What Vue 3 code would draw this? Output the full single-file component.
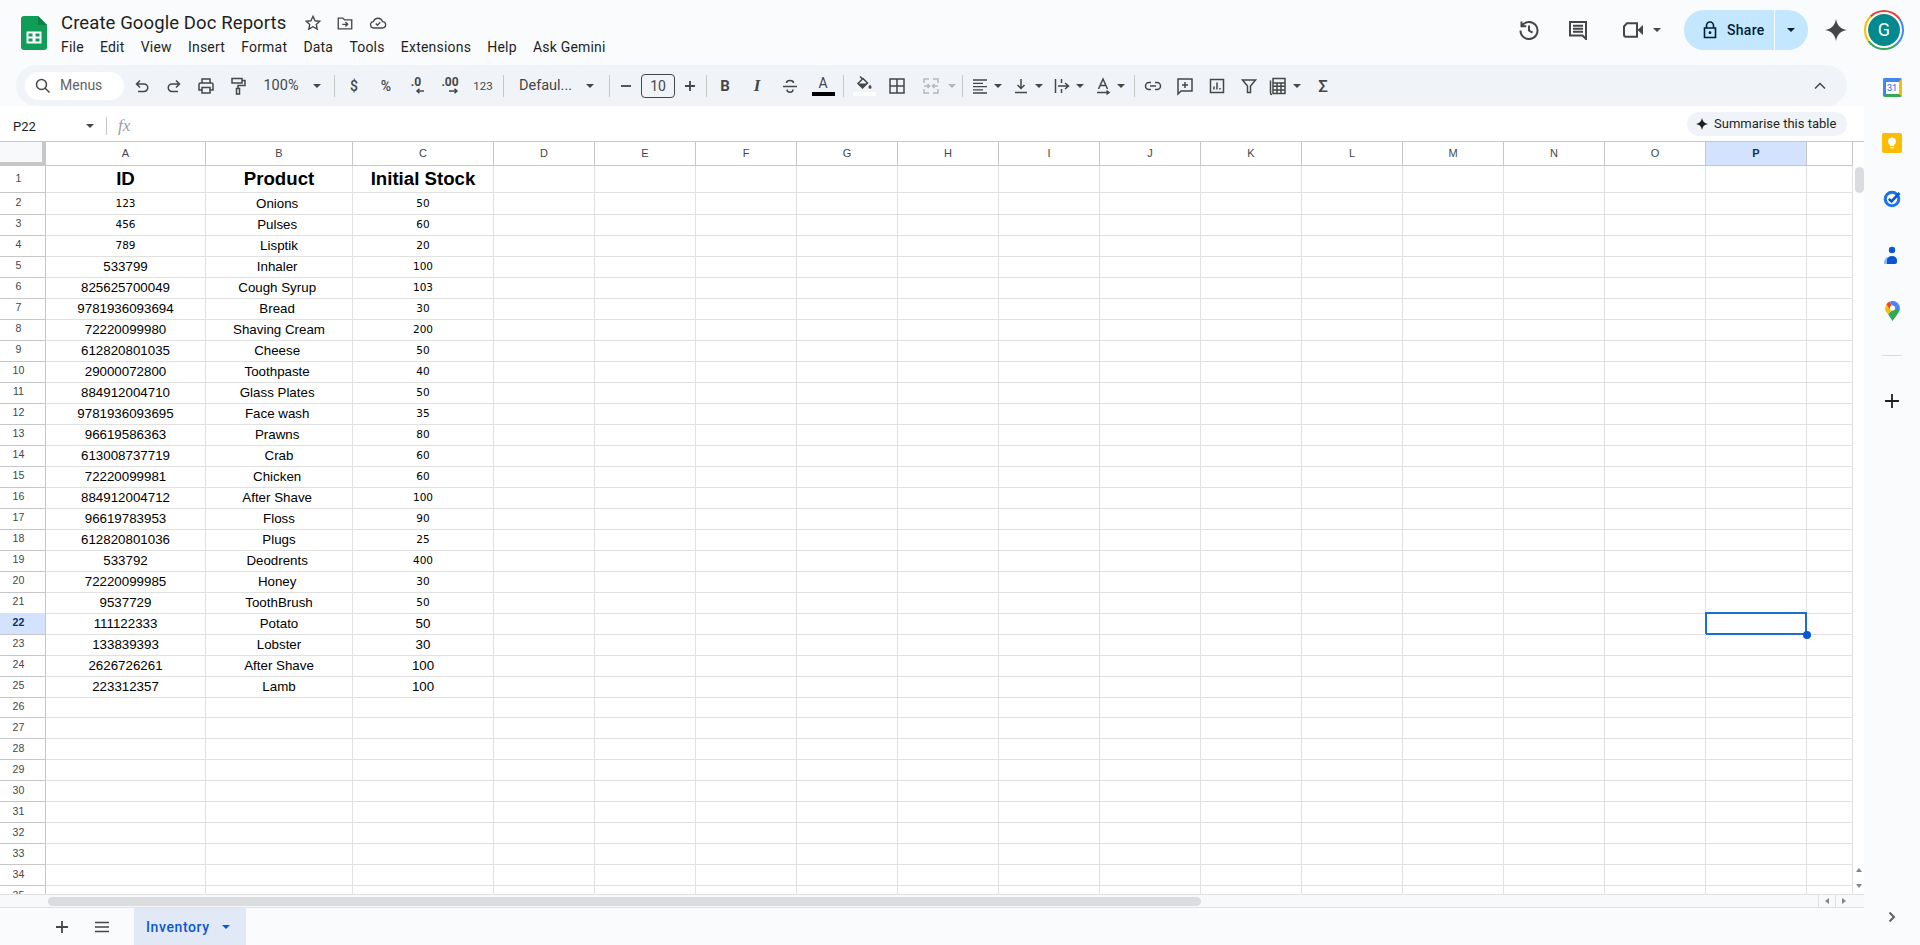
<script setup>
const menus = ['File', 'Edit', 'View', 'Insert', 'Format', 'Data', 'Tools', 'Extensions', 'Help', 'Ask Gemini']

const tools = [
  { w: 32, d: 'M8 4.5 4.5 8 8 11.5M4.5 8H12a3.7 3.7 0 0 1 0 7.5H6' },
  { w: 32, d: 'M12 4.5 15.5 8 12 11.5M15.5 8H8a3.7 3.7 0 0 0 0 7.5H14' },
  { w: 32, d: 'M6 7V3h8v4M6 14H3V8.5A1.5 1.5 0 0 1 4.5 7h11A1.5 1.5 0 0 1 17 8.5V14h-3M6 11.5h8V17H6z' },
  { w: 32, d: 'M4 2.5h10v4.5H4zM14 4.5h3v5H10v3M8.5 12.5h3V18h-3z' },
  { w: 54, text: '100%', cls: 'zoom' },
  { w: 18, caret: true },
  { w: 16, sep: true },
  { w: 24, text: '$', cls: 'fmt' },
  { w: 40, text: '%', cls: 'fmt' },
  { w: 20, text: '.0', cls: 'dec', arrow: 'M17 3h-7M12.500 .8 10 3l2.500 2.200' },
  { w: 48, text: '.00', cls: 'dec', arrow: 'M8 3h8M13.500 .8 16 3l-2.500 2.200' },
  { w: 18, text: '123', cls: 'num' },
  { w: 22, sep: true },
  { w: 63, text: 'Defaul...', cls: 'zoom' },
  { w: 26, caret: true },
  { w: 12, sep: true },
  { w: 22, d: 'M5 10h10', cls: 'heavy' },
  { w: 42, text: '10', cls: 'size' },
  { w: 22, d: 'M10 5v10M5 10h10', cls: 'heavy' },
  { w: 10, sep: true },
  { w: 28, text: 'B', cls: 'bold' },
  { w: 36, text: 'I', cls: 'ital' },
  { w: 30, d: 'M6.5 7C6.5 3.8 13.5 3.8 13.5 7M3 10.5H17M7 13.5C7 17 13 17 13 13.5' },
  { w: 36, text: 'A', cls: 'tcolor', bar: '#000' },
  { w: 4, sep: true },
  { w: 38, d: 'M6 1.5 8 3.5M9 3.5 4 8.5 8.5 13 13.5 8z', f: 'M4 8.5h9.5L8.5 13zM16 9.5c1 1.4 1.5 2 1.5 2.7a1.5 1.5 0 0 1-3 0c0-.7.5-1.3 1.5-2.7z', vb: '0 1 20 15', bar: '#fff' },
  { w: 28, d: 'M3 3h14v14H3zM10 3v14M3 10h14' },
  { w: 20, m: 10, cls: 'dim', d: 'M3 7V3h5M12 3h5v4M3 13v4h5M12 17h5v-4M3 10h5M12 10h5M6.5 8l2 2-2 2M13.5 8l-2 2 2 2' },
  { w: 10, m: 6, caret: true, cls: 'dim' },
  { w: 10, sep: true },
  { w: 26, d: 'M3 4h14M3 7.3h10M3 10.6h14M3 13.9h10M3 17h14', cls: 'thin' },
  { w: 10, caret: true },
  { w: 20, m: 8, d: 'M10 3v9M6.5 9l3.5 3.5L13.5 9M4 16.5h12' },
  { w: 10, m: 3, caret: true },
  { w: 20, m: 8, d: 'M3.5 3v14M9.5 3v4M9.5 13v4M6 10h10M13 7l3.5 3L13 13' },
  { w: 10, m: 3, caret: true },
  { w: 20, m: 8, d: 'M5.5 13 10 3l4.5 10M7 9.5h6M4 16.5h12M13.5 14.5 16 16.5l-2.5 2' },
  { w: 10, m: 3, caret: true },
  { w: 16, sep: true },
  { w: 22, d: 'M8 6.5H6a3.5 3.5 0 0 0 0 7h2M12 6.5h2a3.5 3.5 0 0 1 0 7h-2M7 10h6' },
  { w: 42, d: 'M3 3h14v12H6l-3 3zM10 6v6M7 9h6' },
  { w: 22, d: 'M3.5 3.5h13v13h-13zM7 13.5v-3M10 13.5V6.5M13 13.5v-1.5' },
  { w: 42, d: 'M3.5 4h13L11.5 10v6.5h-3V10z' },
  { w: 16, d: 'M2.5 4.5V17A1.5 1.5 0 0 0 4 18.5M5 2.5h12v15H5zM5 7h12M5 10.3h12M5 14h12M9 7v10.5M13 7v10.5' },
  { w: 10, m: 6, caret: true },
  { w: 42, text: 'Σ', cls: 'sigma' }
]

const columns = ['A', 'B', 'C', 'D', 'E', 'F', 'G', 'H', 'I', 'J', 'K', 'L', 'M', 'N', 'O', 'P', '']

// trailing spaces are kept on purpose, the product names sit off centre in the sheet
const stock = [
  ['123', 'Onions ', '50'], ['456', 'Pulses ', '60'], ['789', 'Lisptik', '20'],
  ['533799', 'Inhaler ', '100'], ['825625700049', 'Cough Syrup ', '103'], ['9781936093694', 'Bread ', '30'],
  ['72220099980', 'Shaving Cream', '200'], ['612820801035', 'Cheese ', '50'], ['29000072800', 'Toothpaste ', '40'],
  ['884912004710', 'Glass Plates ', '50'], ['9781936093695', 'Face wash ', '35'], ['96619586363', 'Prawns ', '80'],
  ['613008737719', 'Crab', '60'], ['72220099981', 'Chicken ', '60'], ['884912004712', 'After Shave ', '100'],
  ['96619783953', 'Floss', '90'], ['612820801036', 'Plugs', '25'], ['533792', 'Deodrents ', '400'],
  ['72220099985', 'Honey ', '30'], ['9537729', 'ToothBrush', '50'], ['111122333', 'Potato', '50'],
  ['133839393', 'Lobster', '30'], ['2626726261', 'After Shave', '100'], ['223312357', 'Lamb', '100']
]

const blanks = Array(14).fill('')
const rows = [
  { n: 1, cells: ['ID', 'Product', 'Initial Stock'], cls: 'head' }
]
for (let n = 2; n <= 35; n++) {
  const s = stock[n - 2] || ['', '', '']
  rows.push({ n, cells: s, smallId: n <= 4, smallStock: n <= 21 })
}
</script>

<template>
  <div class="page">
    <header class="topbar">
      <svg class="logo" width="26" height="34" viewBox="0 0 26 34">
        <path d="M3 0h14l9 9v22a3 3 0 0 1-3 3H3a3 3 0 0 1-3-3V3a3 3 0 0 1 3-3z" fill="#0f9d58" />
        <path d="M17 0l9 9h-9z" fill="#0b8043" />
        <path d="M5.500 15.500h15v12h-15zM7.500 17.500v3h4v-3zM14.500 17.500v3h4v-3zM7.500 22.500v3h4v-3zM14.500 22.500v3h4v-3z" fill="#fff" fill-rule="evenodd" />
      </svg>
      <div class="titles">
        <div class="title-line">
          <span class="doc-title">Create Google Doc Reports</span>
          <svg class="title-icon first" width="18" height="18" viewBox="0 0 20 20"><path class="st" d="M10 2.500l2.300 5 5.200.6-3.900 3.500 1.100 5.300L10 14.200l-4.700 2.700 1.100-5.300L2.500 8.100l5.200-.6z" /></svg>
          <svg class="title-icon" width="18" height="18" viewBox="0 0 20 20"><path class="st" d="M2.500 4.500h5l2 2h8v10h-15zM7 11.500h6M10.500 9l2.500 2.500-2.500 2.500" /></svg>
          <svg class="title-icon" width="20" height="18" viewBox="0 0 20 20"><path class="st" d="M5.500 15.500a3.500 3.500 0 0 1-.5-7 5.200 5.200 0 0 1 10 0 3.500 3.500 0 0 1 0 7zM7.500 10.500l2 2 3-3.500" /></svg>
        </div>
        <nav class="menus">
          <span v-for="m in menus" :key="m">{{ m }}</span>
        </nav>
      </div>

      <div class="actions">
        <svg class="act history" width="20" height="20" viewBox="0 0 20 20"><path class="st wide" d="M2.500 1.500v4.800h4.800M2.800 6A8.500 8.500 0 1 1 1.500 10.500M10 5.500V10.500l3.500 2.200" /></svg>
        <svg class="act comment" width="20" height="20" viewBox="0 0 20 20"><path class="st wide" d="M2 2h16v17l-3.500-3.500H2zM5 5.800h10M5 8.800h10M5 11.800h10" /></svg>
        <svg class="act meet" width="20" height="16" viewBox="0 0 20 16"><path class="st wide" d="M4 1.200h10v13.600H3a2 2 0 0 1-2-2V4.500z" /><path d="M15 7.500 20 3v10l-5-4.500z" fill="#444746" /></svg>
        <span class="caret meet-caret"></span>
        <div class="share">
          <div class="share-main">
            <svg width="14" height="18" viewBox="0 0 14 18"><path d="M3.500 7V4.500a3.500 3.500 0 0 1 7 0V7M1.500 7h11v9.500h-11z" fill="none" stroke="#001d35" stroke-width="1.600" /><circle cx="7" cy="11.700" r="1.400" fill="#001d35" /></svg>
            <span>Share</span>
          </div>
          <div class="share-more"><span class="caret dark"></span></div>
        </div>
        <svg class="gemini" width="22" height="22" viewBox="0 0 20 20"><path d="M10 0C11 6 14 9 20 10 14 11 11 14 10 20 9 14 6 11 0 10 6 9 9 6 10 0z" fill="#444746" /></svg>
        <div class="avatar"><div class="avatar-in">G</div></div>
      </div>
    </header>

    <div class="body">
      <main class="work">
        <div class="toolbar-wrap">
          <div class="toolbar">
            <div class="search">
              <svg width="16" height="16" viewBox="0 0 16 16"><path class="st" d="M6.500 1.500a5 5 0 1 0 0 10 5 5 0 0 0 0-10zM10.200 10.200l4.300 4.300" /></svg>
              <span>Menus</span>
            </div>
            <div
              v-for="(it, i) in tools"
              :key="i"
              class="tool"
              :class="[it.cls, { 'has-bar': it.bar }]"
              :style="{ width: it.w + 'px', marginLeft: (it.m || 0) + 'px' }"
            >
              <span v-if="it.sep" class="sep"></span>
              <span v-else-if="it.caret" class="caret"></span>
              <svg v-else-if="it.d" class="tool-svg" :height="it.vb ? 15 : 20" width="20" :viewBox="it.vb || '0 0 20 20'">
                <path class="st" :d="it.d" />
                <path v-if="it.f" :d="it.f" fill="#444746" />
              </svg>
              <span v-else class="tool-text">{{ it.text }}</span>
              <svg v-if="it.arrow" class="dec-arrow" width="18" height="6" viewBox="0 0 18 6"><path class="st" :d="it.arrow" /></svg>
              <span v-if="it.bar" class="color-bar" :style="{ background: it.bar }"></span>
            </div>
            <svg class="collapse" width="14" height="10" viewBox="0 0 14 10"><path class="st" d="M2 7.500 7 2.500l5 5" /></svg>
          </div>
        </div>

        <div class="formula">
          <span class="cell-ref">P22</span>
          <span class="caret"></span>
          <span class="formula-sep"></span>
          <span class="fx">fx</span>
          <div class="chip">
            <svg width="12" height="12" viewBox="0 0 20 20"><path d="M10 0C11 6 14 9 20 10 14 11 11 14 10 20 9 14 6 11 0 10 6 9 9 6 10 0z" fill="#1f1f1f" /></svg>
            <span>Summarise this table</span>
          </div>
        </div>

        <div class="grid-wrap">
          <div class="sheet">
            <div class="row col-head">
              <div class="corner"></div>
              <div v-for="c in columns" :key="c" class="col-label" :class="{ active: c === 'P' }">{{ c }}</div>
            </div>
            <div v-for="r in rows" :key="r.n" class="row" :class="r.cls">
              <div class="row-label" :class="{ active: r.n === 22 }">{{ r.n }}</div>
              <div class="cell" :class="{ small: r.smallId }">{{ r.cells[0] }}</div>
              <div class="cell">{{ r.cells[1] }}</div>
              <div class="cell" :class="{ small: r.smallStock }">{{ r.cells[2] }}</div>
              <div
                v-for="(b, i) in blanks"
                :key="i"
                class="cell"
                :class="{ selected: r.n === 22 && i === 12 }"
              ></div>
            </div>
          </div>
          <div class="vscroll">
            <div class="vthumb"></div>
            <div class="varrows">
              <div class="varrow"><span class="tri up"></span></div>
              <div class="varrow"><span class="tri down"></span></div>
            </div>
          </div>
        </div>

        <div class="hscroll">
          <div class="hcorner"></div>
          <div class="hthumb"></div>
          <div class="harrows">
            <div class="harrow"><span class="tri left"></span></div>
            <div class="harrow"><span class="tri right"></span></div>
          </div>
        </div>

        <footer class="tabs">
          <svg class="tab-icon add" width="16" height="16" viewBox="0 0 16 16"><path d="M8 2v12M2 8h12" fill="none" stroke="#444746" stroke-width="1.800" /></svg>
          <svg class="tab-icon all" width="16" height="16" viewBox="0 0 16 16"><path d="M1 3.500h14M1 8h14M1 12.500h14" fill="none" stroke="#444746" stroke-width="1.600" /></svg>
          <div class="tab">
            <span>Inventory</span>
            <span class="caret blue"></span>
          </div>
        </footer>
      </main>

      <aside class="side">
        <div class="side-item">
          <div class="cal"><span>31</span></div>
        </div>
        <div class="side-item">
          <svg width="20" height="20" viewBox="0 0 20 20"><rect width="20" height="20" rx="2" fill="#fbbc04" /><path d="M10 4.500a4 4 0 0 0-2.200 7.300V13h4.400v-1.200A4 4 0 0 0 10 4.500zM8 14h4v1.200H8z" fill="#fff" /></svg>
        </div>
        <div class="side-item">
          <svg width="18" height="18" viewBox="0 0 18 18"><circle cx="9" cy="9" r="6.800" fill="none" stroke="#1a73e8" stroke-width="3" /><path d="M5.800 8.800 8.500 11.500 16.500 3" fill="none" stroke="#0b57d0" stroke-width="2.600" /></svg>
        </div>
        <div class="side-item">
          <svg width="16" height="18" viewBox="0 0 16 18"><circle cx="8" cy="4" r="3.200" fill="#0b57d0" /><path d="M3 18H1a1 1 0 0 1-1-1c0-3 2-6 4-6z" fill="#8ab4f8" /><path d="M3 18v-4c0-2 2-4 5-4s5 2 5 4v2a2 2 0 0 1-2 2z" fill="#0b57d0" /></svg>
        </div>
        <div class="side-item">
          <svg width="15" height="20" viewBox="0 0 15 20">
            <path d="M7.500 20 3 13l5-4.500 7-1c0 3-3.500 7-7.500 12.500z" fill="#34a853" />
            <path d="M1.500 3 0 7.500C0 10 1.500 11.500 3 13l4-4.500z" fill="#fbbc04" />
            <path d="M1.500 3A7.500 7.500 0 0 1 5 .5l2 5-2 3z" fill="#ea4335" />
            <path d="M5 .5A7.500 7.500 0 0 1 13.500 3l-4 4.500-2-2z" fill="#4285f4" />
            <path d="M13.500 3a7.500 7.500 0 0 1 1.500 4.500L9 9l.5-2z" fill="#4285f4" />
            <circle cx="7.500" cy="7" r="2.600" fill="#fff" />
          </svg>
        </div>
        <div class="side-line"></div>
        <svg class="side-plus" width="14" height="14" viewBox="0 0 14 14"><path d="M7 0v14M0 7h14" fill="none" stroke="#1f1f1f" stroke-width="1.800" /></svg>
        <svg class="side-chevron" width="8" height="12" viewBox="0 0 8 12"><path d="M1.500 1.500 6 6l-4.500 4.500" fill="none" stroke="#5f6368" stroke-width="2" /></svg>
      </aside>
    </div>
  </div>
</template>

<style>
html, body {
  margin: 0;
  overflow: hidden;
}
</style>

<style scoped>
.page {
  width: 100%;
  height: 100vh;
  display: flex;
  flex-direction: column;
  background: #f9fbfd;
  font-family: Roboto, "Liberation Sans", sans-serif;
  color: #1f1f1f;
  overflow: hidden;
}
.st {
  fill: none;
  stroke: #444746;
  stroke-width: 1.5;
}
.st.wide {
  stroke-width: 2;
}

/* top bar */
.topbar {
  height: 59px;
  flex: none;
  display: flex;
  align-items: flex-start;
  padding: 10px 16px 0 21px;
  box-sizing: border-box;
}
.logo {
  margin-top: 6px;
  flex: none;
}
.titles {
  margin-left: 14px;
}
.title-line {
  display: flex;
  align-items: center;
  height: 26px;
}
.doc-title {
  font-size: 18.500px;
  letter-spacing: 0.1px;
  color: #1f1f1f;
}
.title-icon {
  margin-left: 14px;
}
.title-icon.first {
  margin-left: 18px;
}
.menus {
  display: flex;
  gap: 16.200px;
  font-size: 14px;
  letter-spacing: 0.2px;
  color: #1f1f1f;
  margin-top: 1px;
  line-height: 20px;
}
.actions {
  margin-left: auto;
  display: flex;
  align-items: center;
  height: 40px;
}
.comment {
  margin-left: 29px;
}
.meet {
  margin-left: 35px;
}
.meet-caret {
  margin-left: 10px;
}
.caret {
  display: inline-block;
  width: 0;
  height: 0;
  flex: none;
  border-left: 4px solid transparent;
  border-right: 4px solid transparent;
  border-top: 4px solid #444746;
}
.caret.dark {
  border-top-color: #001d35;
}
.caret.blue {
  border-top-color: #0b57d0;
}
.share {
  margin-left: 23px;
  display: flex;
  height: 40px;
  color: #001d35;
  font-size: 14px;
  font-weight: 500;
  letter-spacing: 0.3px;
}
.share-main {
  width: 90px;
  box-sizing: border-box;
  padding-left: 19px;
  display: flex;
  align-items: center;
  gap: 10px;
  background: #c2e7ff;
  border-radius: 20px 0 0 20px;
}
.share-more {
  width: 33px;
  margin-left: 1px;
  padding-right: 2px;
  box-sizing: border-box;
  display: flex;
  align-items: center;
  justify-content: center;
  background: #c2e7ff;
  border-radius: 0 20px 20px 0;
}
.gemini {
  margin-left: 17px;
}
.avatar {
  margin-left: 17px;
  width: 40px;
  height: 40px;
  border-radius: 50%;
  display: flex;
  align-items: center;
  justify-content: center;
  background: conic-gradient(#ea4335 0 15%, #4285f4 15% 40%, #34a853 40% 65%, #fbbc04 65% 88%, #ea4335 88%);
}
.avatar-in {
  width: 32px;
  height: 32px;
  border-radius: 50%;
  background: #00898f;
  outline: 2px solid #fff;
  color: #fff;
  font-size: 18px;
  line-height: 32px;
  text-align: center;
}

/* main area */
.body {
  flex: 1;
  min-height: 0;
  display: flex;
}
.work {
  flex: 1;
  min-width: 0;
  display: flex;
  flex-direction: column;
}
.toolbar-wrap {
  flex: none;
  padding: 6px 17px 0 16px;
}
.toolbar {
  height: 41px;
  display: flex;
  align-items: center;
  padding: 0 15px 0 9px;
  background: #f0f4f9;
  border-radius: 21px;
}
.search {
  width: 99px;
  height: 28px;
  flex: none;
  box-sizing: border-box;
  padding-left: 10px;
  margin-right: 2px;
  display: flex;
  align-items: center;
  gap: 9px;
  background: #fff;
  border-radius: 14px;
  font-size: 14px;
  color: #5f6368;
}
.search span {
  padding-bottom: 2px;
}
.tool {
  flex: none;
  height: 30px;
  display: flex;
  flex-direction: column;
  align-items: center;
  justify-content: center;
  color: #444746;
  font-size: 14px;
}
.tool-svg {
  flex: none;
  overflow: visible;
}
.sep {
  width: 1px;
  height: 22px;
  background: #c7c7c7;
}
.zoom {
  font-size: 14.500px;
}
.heavy .st {
  stroke-width: 1.800;
}
.thin .st {
  stroke-width: 1.300;
}
.dim .st {
  stroke: #b4b8bc;
}
.dim .caret {
  border-top-color: #b4b8bc;
}
.fmt {
  font-weight: 500;
  font-size: 14px;
}
.dec {
  font-size: 12px;
  font-weight: 700;
  line-height: 11px;
}
.dec-arrow {
  flex: none;
}
.num {
  font-size: 11.500px;
}
.size .tool-text {
  width: 32px;
  height: 22px;
  line-height: 22px;
  text-align: center;
  border: 1px solid #444746;
  border-radius: 4px;
}
.bold {
  font-weight: 700;
  font-size: 15px;
}
.ital {
  font-family: "Liberation Serif", serif;
  font-style: italic;
  font-weight: 700;
  font-size: 17px;
}
.tcolor {
  font-size: 14px;
}
.tcolor .tool-text {
  line-height: 15px;
}
.color-bar {
  width: 23px;
  height: 4px;
  margin-top: 1px;
  flex: none;
}
.sigma {
  font-size: 17px;
  font-weight: 500;
}
.collapse {
  margin-left: auto;
  margin-right: 5px;
}

/* formula bar */
.formula {
  height: 35px;
  flex: none;
  display: flex;
  align-items: center;
  box-sizing: border-box;
  padding: 5px 17px 0 13px;
  background: #fff;
  font-size: 13px;
}
.cell-ref {
  width: 73px;
}
.formula-sep {
  width: 1px;
  height: 18px;
  margin-left: 12px;
  background: #c7c7c7;
}
.fx {
  margin-left: 11px;
  font-family: "Liberation Serif", serif;
  font-style: italic;
  font-size: 17px;
  color: #9aa0a6;
}
.chip {
  margin-left: auto;
  margin-top: -5px;
  width: 160px;
  height: 24px;
  box-sizing: border-box;
  padding-left: 9px;
  display: flex;
  align-items: center;
  gap: 6px;
  background: #f0f4f9;
  border-radius: 12px;
  font-size: 13px;
  color: #1f1f1f;
}

/* sheet */
.grid-wrap {
  flex: 1;
  min-height: 0;
  display: flex;
  overflow: hidden;
  background: #fff;
  border-top: 1px solid #c7c7c7;
}
.sheet {
  width: 1853px;
  flex: none;
  overflow: hidden;
  font-family: "Liberation Sans", Arial, sans-serif;
}
.row {
  display: grid;
  grid-template-columns: 46px 160px 147px 141px repeat(13, 101px) 46px;
  height: 21px;
}
.row.col-head {
  height: 24px;
}
.row.head {
  height: 27px;
}
.corner {
  background: #f8f9fa;
  border-right: 4px solid #c7c7c7;
  border-bottom: 4px solid #c7c7c7;
  box-sizing: border-box;
}
.col-label {
  box-sizing: border-box;
  border-right: 1px solid #c7c7c7;
  border-bottom: 1px solid #c7c7c7;
  font-size: 11px;
  line-height: 23px;
  text-align: center;
  color: #444746;
}
.col-label.active {
  background: #d3e3fd;
  color: #0b2f66;
  font-weight: 700;
}
.row-label {
  box-sizing: border-box;
  border-right: 1px solid #c7c7c7;
  border-bottom: 1px solid #c7c7c7;
  padding-right: 8px;
  font-size: 10.600px;
  line-height: 18px;
  text-align: center;
  color: #444746;
}
.row-label.active {
  background: #d3e3fd;
  color: #0b2f66;
  font-weight: 700;
}
.head .row-label {
  line-height: 24px;
}
.cell {
  position: relative;
  box-sizing: border-box;
  border-right: 1px solid #e1e1e1;
  border-bottom: 1px solid #e1e1e1;
  font-size: 13.330px;
  line-height: 21px;
  text-align: center;
  white-space: pre;
  color: #000;
}
.head .cell {
  font-size: 18.670px;
  font-weight: 700;
  line-height: 26px;
}
.cell.small {
  font-family: "DejaVu Sans", sans-serif;
  font-size: 10.500px;
}
.cell.selected::after {
  content: "";
  position: absolute;
  top: -1px;
  left: -1px;
  right: -1px;
  bottom: -1px;
  border: 2px solid #1a6fd0;
}
.cell.selected::before {
  content: "";
  position: absolute;
  z-index: 1;
  right: -5px;
  bottom: -5px;
  width: 8px;
  height: 8px;
  border-radius: 50%;
  background: #0b57d0;
}
.vscroll {
  flex: 1;
  display: flex;
  flex-direction: column;
  background: #fff;
}
.vthumb {
  width: 9px;
  height: 26px;
  margin: 25px 0 0 2px;
  background: #dadce0;
  border-radius: 5px;
}
.varrows {
  margin-top: auto;
}
.varrow {
  height: 16px;
  display: flex;
  align-items: center;
  justify-content: center;
}
.tri {
  width: 0;
  height: 0;
}
.tri.up {
  border-left: 3px solid transparent;
  border-right: 3px solid transparent;
  border-bottom: 4px solid #80868b;
}
.tri.down {
  border-left: 3px solid transparent;
  border-right: 3px solid transparent;
  border-top: 4px solid #80868b;
}
.tri.left {
  border-top: 3px solid transparent;
  border-bottom: 3px solid transparent;
  border-right: 4px solid #80868b;
}
.tri.right {
  border-top: 3px solid transparent;
  border-bottom: 3px solid transparent;
  border-left: 4px solid #80868b;
}
.hscroll {
  height: 14px;
  flex: none;
  box-sizing: border-box;
  display: flex;
  align-items: center;
  background: #f8f9fa;
  border-top: 1px solid #e1e1e1;
  border-bottom: 1px solid #e1e1e1;
}
.hcorner {
  width: 48px;
}
.hthumb {
  width: 1153px;
  height: 9px;
  background: #dadce0;
  border-radius: 5px;
}
.harrows {
  margin-left: auto;
  margin-right: 12px;
  display: flex;
}
.harrow {
  width: 16px;
  height: 12px;
  display: flex;
  align-items: center;
  justify-content: center;
  border-left: 1px solid #e1e1e1;
}

/* sheet tabs */
.tabs {
  height: 37px;
  flex: none;
  display: flex;
  align-items: stretch;
}
.tab-icon {
  align-self: center;
}
.add {
  margin-left: 54px;
}
.all {
  margin-left: 24px;
}
.tab {
  margin-left: 24px;
  width: 112px;
  box-sizing: border-box;
  padding-left: 12px;
  display: flex;
  align-items: center;
  gap: 12px;
  background: #e1e9f7;
  font-size: 14px;
  font-weight: 500;
  letter-spacing: 0.6px;
  color: #0b57d0;
}

/* side panel */
.side {
  width: 56px;
  flex: none;
  display: flex;
  flex-direction: column;
  align-items: center;
  padding-bottom: 22px;
  box-sizing: border-box;
}
.side-item {
  height: 56px;
  width: 100%;
  flex: none;
  display: flex;
  align-items: center;
  justify-content: center;
}
.cal {
  width: 19px;
  height: 19px;
  box-sizing: border-box;
  background: #fff;
  border-top: 4px solid #4285f4;
  border-left: 3px solid #4285f4;
  border-right: 3px solid #fbbc04;
  border-bottom: 3px solid #34a853;
  border-radius: 2px;
  font-size: 9px;
  font-weight: 500;
  line-height: 12px;
  text-align: center;
  color: #4285f4;
}
.side-line {
  width: 20px;
  height: 1px;
  margin-top: 16px;
  background: #dadce0;
}
.side-plus {
  margin-top: 38px;
}
.side-chevron {
  margin-top: auto;
}
</style>
